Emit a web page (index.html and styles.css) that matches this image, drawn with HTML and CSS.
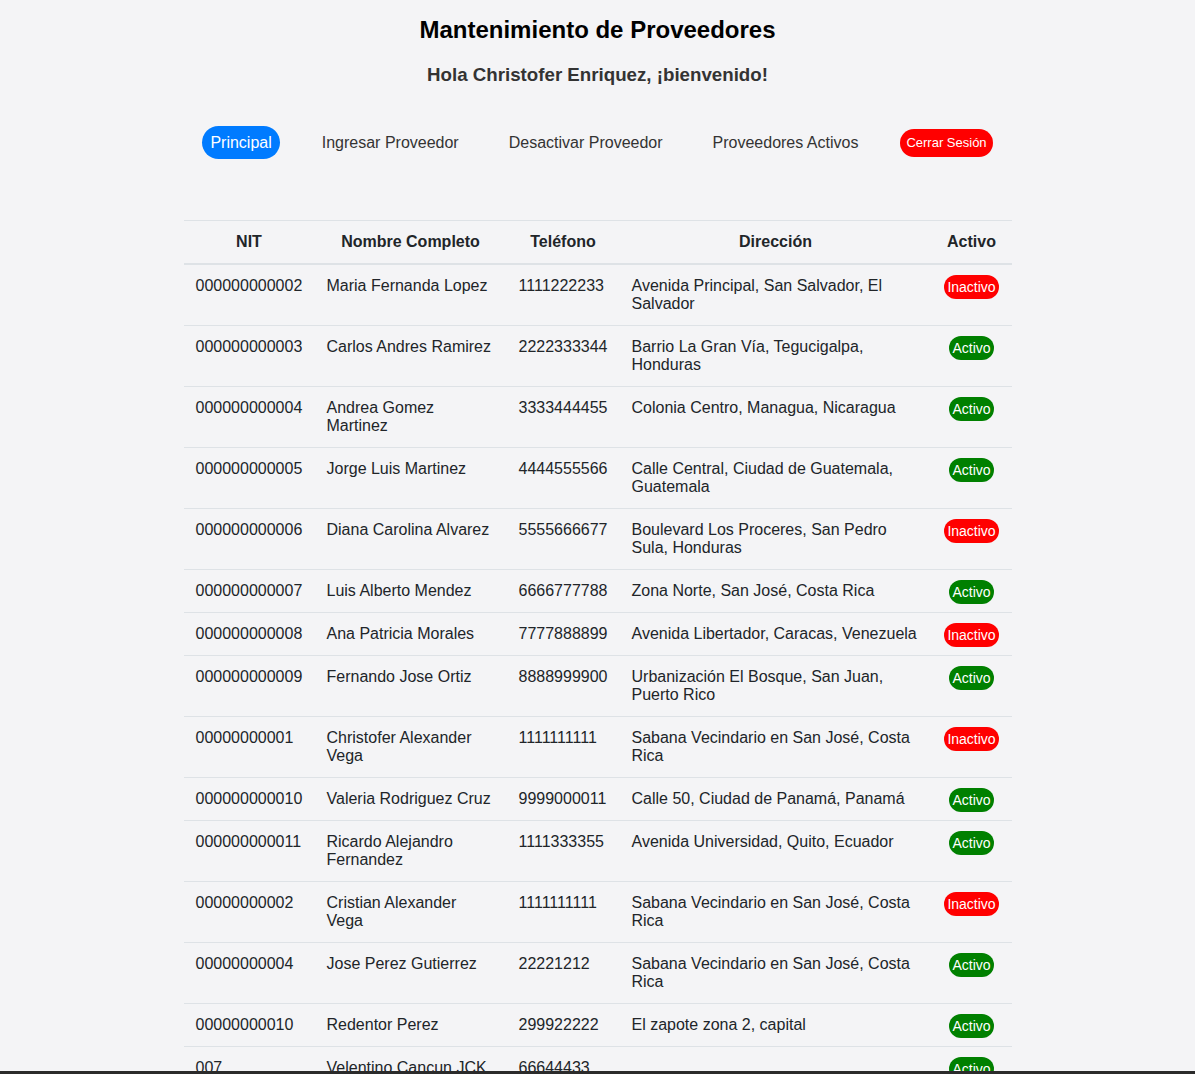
FILE: index.html
```html
<!DOCTYPE html>
<html lang="es">
<head>
<meta charset="utf-8">
<title>Mantenimiento de Proveedores</title>
<link rel="stylesheet" href="styles.css">
</head>
<body>
<div class="page">
  <h1 class="title">Mantenimiento de Proveedores</h1>
  <h2 class="welcome">Hola Christofer Enriquez, ¡bienvenido!</h2>
  <nav class="nav">
    <a class="nav-link active" href="#">Principal</a>
    <a class="nav-link" href="#">Ingresar Proveedor</a>
    <a class="nav-link" href="#">Desactivar Proveedor</a>
    <a class="nav-link" href="#">Proveedores Activos</a>
    <a class="logout" href="#">Cerrar Sesión</a>
  </nav>
  <table class="table">
    <colgroup>
      <col class="c-nit"><col class="c-name"><col class="c-tel"><col class="c-dir"><col class="c-act">
    </colgroup>
    <thead>
      <tr><th>NIT</th><th>Nombre Completo</th><th>Teléfono</th><th>Dirección</th><th>Activo</th></tr>
    </thead>
    <tbody>
      <tr><td>000000000002</td><td>Maria Fernanda Lopez</td><td>1111222233</td><td>Avenida Principal, San Salvador, El Salvador</td><td class="st"><span class="badge off">Inactivo</span></td></tr>
      <tr><td>000000000003</td><td>Carlos Andres Ramirez</td><td>2222333344</td><td>Barrio La Gran Vía, Tegucigalpa, Honduras</td><td class="st"><span class="badge on">Activo</span></td></tr>
      <tr><td>000000000004</td><td>Andrea Gomez Martinez</td><td>3333444455</td><td>Colonia Centro, Managua, Nicaragua</td><td class="st"><span class="badge on">Activo</span></td></tr>
      <tr><td>000000000005</td><td>Jorge Luis Martinez</td><td>4444555566</td><td>Calle Central, Ciudad de Guatemala, Guatemala</td><td class="st"><span class="badge on">Activo</span></td></tr>
      <tr><td>000000000006</td><td>Diana Carolina Alvarez</td><td>5555666677</td><td>Boulevard Los Proceres, San Pedro Sula, Honduras</td><td class="st"><span class="badge off">Inactivo</span></td></tr>
      <tr><td>000000000007</td><td>Luis Alberto Mendez</td><td>6666777788</td><td>Zona Norte, San José, Costa Rica</td><td class="st"><span class="badge on">Activo</span></td></tr>
      <tr><td>000000000008</td><td>Ana Patricia Morales</td><td>7777888899</td><td>Avenida Libertador, Caracas, Venezuela</td><td class="st"><span class="badge off">Inactivo</span></td></tr>
      <tr><td>000000000009</td><td>Fernando Jose Ortiz</td><td>8888999900</td><td>Urbanización El Bosque, San Juan, Puerto Rico</td><td class="st"><span class="badge on">Activo</span></td></tr>
      <tr><td>00000000001</td><td>Christofer Alexander Vega</td><td>1111111111</td><td>Sabana Vecindario en San José, Costa Rica</td><td class="st"><span class="badge off">Inactivo</span></td></tr>
      <tr><td>000000000010</td><td>Valeria Rodriguez Cruz</td><td>9999000011</td><td>Calle 50, Ciudad de Panamá, Panamá</td><td class="st"><span class="badge on">Activo</span></td></tr>
      <tr><td>000000000011</td><td>Ricardo Alejandro Fernandez</td><td>1111333355</td><td>Avenida Universidad, Quito, Ecuador</td><td class="st"><span class="badge on">Activo</span></td></tr>
      <tr><td>00000000002</td><td>Cristian Alexander Vega</td><td>1111111111</td><td>Sabana Vecindario en San José, Costa Rica</td><td class="st"><span class="badge off">Inactivo</span></td></tr>
      <tr><td>00000000004</td><td>Jose Perez Gutierrez</td><td>22221212</td><td>Sabana Vecindario en San José, Costa Rica</td><td class="st"><span class="badge on">Activo</span></td></tr>
      <tr><td>00000000010</td><td>Redentor Perez</td><td>299922222</td><td>El zapote zona 2, capital</td><td class="st"><span class="badge on">Activo</span></td></tr>
      <tr><td>007</td><td>Velentino Cancun JCK</td><td>66644433</td><td></td><td class="st"><span class="badge on">Activo</span></td></tr>
    </tbody>
  </table>
</div>
<div class="frame-bottom"></div>
</body>
</html>
```

FILE: styles.css
```css
html, body {
  margin: 0;
  padding: 0;
  background: #f4f4f6;
}
body {
  font-family: "Liberation Sans", Arial, sans-serif;
  color: #212529;
  font-size: 16px;
}
.page {
  width: 828px;
  margin: 0 auto;
  padding-top: 16px;
  display: flex;
  flex-direction: column;
  align-items: center;
}
.title {
  font-size: 24px;
  line-height: 28px;
  font-weight: bold;
  color: #000;
  margin: 0 0 20px 0;
  text-align: center;
}
.welcome {
  font-size: 18.72px;
  line-height: 22px;
  font-weight: bold;
  color: #333;
  margin: 0 0 40px 0;
  text-align: center;
}
.nav {
  display: flex;
  align-items: center;
  justify-content: center;
  gap: 34px;
  height: 33px;
  margin-bottom: 61px;
}
.nav-link {
  display: block;
  padding: 7px 8px;
  line-height: 19px;
  color: #333;
  text-decoration: none;
  border-radius: 17px;
}
.nav-link.active {
  background: #007bff;
  color: #fff;
}
.logout {
  display: block;
  background: #ff0000;
  color: #fff;
  font-size: 13px;
  line-height: 16px;
  padding: 6px 6px;
  border-radius: 14px;
  text-decoration: none;
}
.table {
  width: 828px;
  border-collapse: collapse;
  table-layout: fixed;
}
.c-nit { width: 131px; }
.c-name { width: 192px; }
.c-tel { width: 113px; }
.c-dir { width: 312px; }
.c-act { width: 80px; }
.table th {
  font-weight: bold;
  text-align: center;
  padding: 12px;
  border-top: 1px solid #dee2e6;
  border-bottom: 2px solid #dee2e6;
  line-height: 18px;
}
.table td {
  padding: 12px;
  vertical-align: top;
  border-top: 1px solid #dee2e6;
  line-height: 18px;
}
.table td.st {
  text-align: center;
  padding: 10px 0 8px;
}
.badge {
  display: inline-block;
  vertical-align: top;
  color: #fff;
  font-size: 14px;
  line-height: 16px;
  padding: 4px 3px;
  border-radius: 12px;
}
.badge.on { background: #008000; }
.badge.off { background: #ff0000; }
.frame-bottom {
  position: fixed;
  left: 0;
  right: 0;
  bottom: 0;
  height: 3px;
  background: #2b2b2b;
}
```
